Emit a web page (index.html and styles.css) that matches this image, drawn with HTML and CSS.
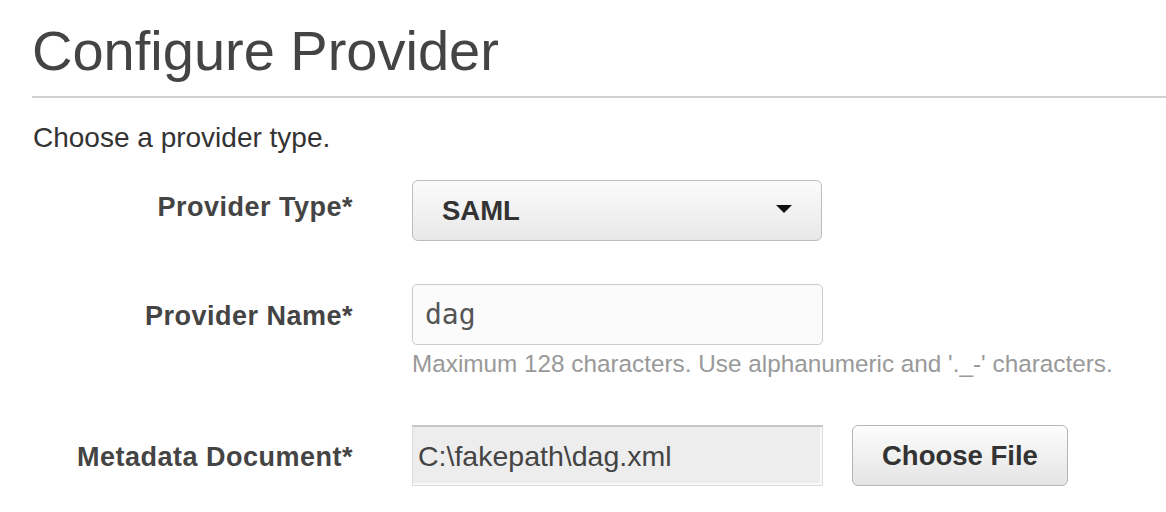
FILE: index.html
```html
<!DOCTYPE html>
<html lang="en">
<head>
<meta charset="utf-8">
<title>Configure Provider</title>
<link rel="stylesheet" href="styles.css">
</head>
<body>
<div class="page">
  <h1 class="title">Configure Provider</h1>
  <div class="divider"></div>
  <p class="intro">Choose a provider type.</p>
  <div class="form">
    <div class="label label-type">Provider Type*</div>
    <div class="control">
      <div class="select">
        <span class="select-value">SAML</span>
        <svg class="caret" width="16" height="8" viewBox="0 0 16 8"><polygon points="0,0 16,0 8,8" fill="#111"/></svg>
      </div>
    </div>

    <div class="label">Provider Name*</div>
    <div class="control">
      <div class="input">dag</div>
      <div class="help">Maximum 128 characters. Use alphanumeric and '._-' characters.</div>
    </div>

    <div class="label">Metadata Document*</div>
    <div class="control file-row">
      <div class="file-path">C:\fakepath\dag.xml</div>
      <div class="button">Choose File</div>
    </div>
  </div>
</div>
</body>
</html>
```

FILE: styles.css
```css
html, body {
  margin: 0;
  padding: 0;
  background: #ffffff;
}

body {
  font-family: "Liberation Sans", Arial, Helvetica, sans-serif;
  color: #444;
}

.page {
  padding-left: 32px;
  width: 1134px;
}

.title {
  margin: 0;
  padding-top: 19px;
  font-size: 56px;
  line-height: 64px;
  font-weight: normal;
  color: #444;
}

.divider {
  margin-top: 13px;
  height: 0;
  border-top: 2px solid #d2d2d2;
}

.intro {
  margin: 24px 0 0 1px;
  font-size: 28px;
  line-height: 32px;
  color: #333;
}

.form {
  display: grid;
  grid-template-columns: 321px 1fr;
  column-gap: 59px;
  row-gap: 43px;
  margin-top: 26px;
  align-items: start;
}

.label {
  text-align: right;
  font-size: 27px;
  letter-spacing: 0.5px;
  font-weight: bold;
  line-height: 30px;
  color: #444;
  padding-top: 17px;
}

.label-type {
  padding-top: 12px;
}

.control {
  display: flex;
  flex-direction: column;
}

.select {
  box-sizing: border-box;
  width: 410px;
  height: 61px;
  border: 1px solid #bdbdbd;
  border-radius: 6px;
  background: linear-gradient(#fbfbfb, #e8e8e8);
  display: flex;
  align-items: center;
  justify-content: space-between;
  padding: 0 29px 0 29px;
}

.select-value {
  font-weight: bold;
  font-size: 27.5px;
  color: #333;
}

.caret {
  display: block;
  margin-top: -4px;
}

.input {
  box-sizing: border-box;
  width: 411px;
  height: 61px;
  border: 1px solid #cccccc;
  border-radius: 5px;
  background: #fbfbfb;
  padding-left: 12px;
  display: flex;
  align-items: center;
  font-family: "DejaVu Sans Mono", "Liberation Mono", monospace;
  font-size: 28px;
  color: #555;
}

.help {
  margin-top: 6px;
  margin-bottom: 5px;
  font-size: 24.3px;
  line-height: 26px;
  color: #999;
  white-space: nowrap;
}

.file-row {
  flex-direction: row;
  align-items: flex-start;
  gap: 29px;
}

.file-path {
  box-sizing: border-box;
  width: 411px;
  height: 61px;
  background: #ededed;
  border: 1px solid #dcdcdc;
  border-top: 2px solid #c6c6c6;
  box-shadow: inset -2px -2px 0 #fafafa;
  padding-left: 5px;
  display: flex;
  align-items: center;
  font-size: 28.5px;
  color: #444;
}

.button {
  box-sizing: border-box;
  height: 61px;
  padding: 0 29px;
  border: 1px solid #b5b5b5;
  border-radius: 6px;
  background: linear-gradient(#fdfdfd, #e4e4e4);
  display: flex;
  align-items: center;
  font-weight: bold;
  font-size: 27.5px;
  color: #333;
}
```
